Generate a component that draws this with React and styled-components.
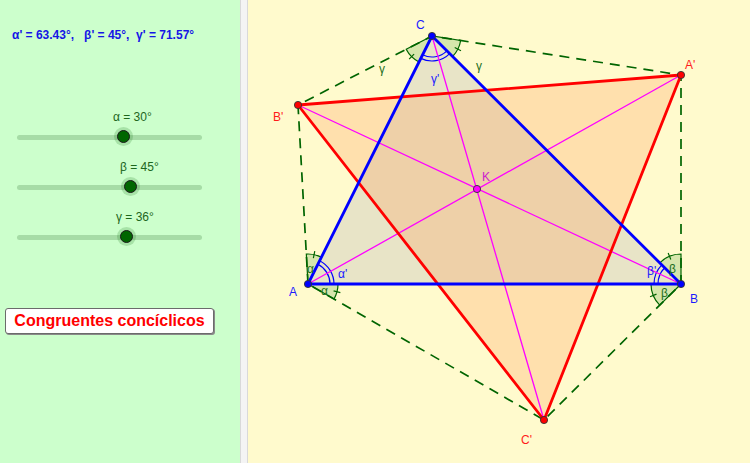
import React from 'react'
import styled, { createGlobalStyle } from 'styled-components'

const GlobalStyle = createGlobalStyle`
html, body {
  margin: 0;
  padding: 0;
  overflow: hidden;
}
body {
  font-family: "Liberation Sans", Arial, sans-serif;
}
`

const Page = styled.div`
display: flex;
width: 750px;
height: 463px;
`

const LeftPanel = styled.div`
width: 240px;
flex-shrink: 0;
background-color: #ccffcc;
display: flex;
flex-direction: column;
padding-top: 28px;
box-sizing: border-box;
`

const InfoLine = styled.div`
padding-left: 12px;
font-size: 12px;
line-height: 14px;
font-weight: bold;
color: #1515e6;
white-space: pre;
`

const SliderList = styled.div`
display: flex;
flex-direction: column;
gap: 10px;
margin-top: 68px;
`

const SliderBox = styled.div`
display: flex;
flex-direction: column;
padding-left: 17px;
`

const SliderLabel = styled.div`
font-size: 12px;
line-height: 14px;
color: #1d661d;
white-space: nowrap;
`

const TrackRow = styled.div`
height: 26px;
display: flex;
align-items: center;
`

const Track = styled.div`
position: relative;
width: 185px;
height: 5px;
border-radius: 3px;
background-color: #a6dca6;
`

const Thumb = styled.div`
position: absolute;
top: 50%;
width: 11px;
height: 11px;
margin: -7px 0 0 -7px;
border-radius: 50%;
background-color: #006600;
border: 1.5px solid #1a1a1a;
box-shadow: 0 0 0 3px rgba(0, 100, 0, 0.18);
`

const Button = styled.button`
align-self: flex-start;
margin: 58px 0 0 5px;
width: 209px;
height: 26px;
padding: 0;
background-color: #ffffff;
border: 1px solid #6b6b6b;
border-radius: 3px;
box-shadow: 1px 1px 0 #8a8a8a;
font-family: "Liberation Sans", Arial, sans-serif;
font-size: 16px;
font-weight: bold;
color: #ff0000;
cursor: pointer;
`

const Divider = styled.div`
width: 6px;
flex-shrink: 0;
background-color: #f4f4f4;
border-left: 1px solid #d9d9d9;
border-right: 1px solid #d9d9d9;
`

const Canvas = styled.div`
flex: 1;
background-color: #fffacd;
overflow: hidden;
svg {
  display: block;
}
`

const sliders = [
  { label: 'α = 30°', pos: 107, labelPad: 96 },
  { label: 'β = 45°', pos: 114, labelPad: 103 },
  { label: 'γ = 36°', pos: 110, labelPad: 99 },
]

const P = {
  A: [308, 284],
  B: [681, 284],
  C: [432, 36],
  A1: [681, 75],
  B1: [298, 105],
  C1: [544, 420],
  K: [477, 189],
}

const pt = (c, r, deg) => {
  const t = (deg * Math.PI) / 180
  return [c[0] + r * Math.cos(t), c[1] - r * Math.sin(t)]
}

const sectorPath = (c, r, a1, a2) => {
  const p1 = pt(c, r, a1)
  const p2 = pt(c, r, a2)
  return `M${c[0]} ${c[1]} L${p1[0]} ${p1[1]} A${r} ${r} 0 0 0 ${p2[0]} ${p2[1]} Z`
}

const arcPath = (c, r, a1, a2) => {
  const p1 = pt(c, r, a1)
  const p2 = pt(c, r, a2)
  return `M${p1[0]} ${p1[1]} A${r} ${r} 0 0 0 ${p2[0]} ${p2[1]}`
}

const Sector = ({ c, r, a1, a2 }) => {
  const mid = (a1 + a2) / 2
  const t1 = pt(c, r - 3.5, mid)
  const t2 = pt(c, r + 3.5, mid)
  return (
    <g>
      <path d={sectorPath(c, r, a1, a2)} fill="rgba(0,128,0,0.16)" stroke="#006400" strokeWidth="1.2" />
      <line x1={t1[0]} y1={t1[1]} x2={t2[0]} y2={t2[1]} stroke="#006400" strokeWidth="1.2" />
    </g>
  )
}

const DoubleArc = ({ c, a1, a2, r1, r2 }) => (
  <g fill="none" stroke="#0000ff" strokeWidth="1.2">
    <path d={arcPath(c, r1, a1, a2)} />
    <path d={arcPath(c, r2, a1, a2)} />
  </g>
)

const Dot = ({ p, color }) => (
  <circle cx={p[0]} cy={p[1]} r="3.6" fill={color} stroke="#333" strokeWidth="0.9" />
)

const poly = (list) => list.map((p) => p.join(',')).join(' ')

const Figure = () => {
  const { A, B, C, A1, B1, C1, K } = P
  return (
    <svg width="502" height="463" viewBox="248 0 502 463" fontFamily="Liberation Sans, Arial, sans-serif" fontSize="12">
      <polygon points={poly([A, B, C])} fill="rgba(120,120,170,0.17)" />
      <polygon points={poly([A1, B1, C1])} fill="rgba(255,150,80,0.26)" />

      <polygon
        points={poly([A, B1, C, A1, B, C1])}
        fill="none"
        stroke="#006400"
        strokeWidth="1.7"
        strokeDasharray="10 7"
      />

      <Sector c={C} r={29} a1={-152.8} a2={-116.57} />
      <Sector c={C} r={29} a1={-44.9} a2={-8.9} />
      <Sector c={A} r={30} a1={63.43} a2={93.2} />
      <Sector c={A} r={30} a1={-30} a2={0} />
      <Sector c={B} r={30} a1={90} a2={135.1} />
      <Sector c={B} r={30} a1={180} a2={224.8} />

      <DoubleArc c={C} a1={-116.57} a2={-44.9} r1={21} r2={25} />
      <DoubleArc c={A} a1={0} a2={63.43} r1={22} r2={26} />
      <DoubleArc c={B} a1={135.1} a2={180} r1={23} r2={27} />

      <g stroke="#ff00ff" strokeWidth="1.3">
        <line x1={A[0]} y1={A[1]} x2={A1[0]} y2={A1[1]} />
        <line x1={B[0]} y1={B[1]} x2={B1[0]} y2={B1[1]} />
        <line x1={C[0]} y1={C[1]} x2={C1[0]} y2={C1[1]} />
      </g>

      <polygon points={poly([A1, B1, C1])} fill="none" stroke="#ff0000" strokeWidth="2.8" strokeLinejoin="round" />
      <polygon points={poly([A, B, C])} fill="none" stroke="#0000ff" strokeWidth="2.8" strokeLinejoin="round" />

      <Dot p={A} color="#0000ff" />
      <Dot p={B} color="#0000ff" />
      <Dot p={C} color="#0000ff" />
      <Dot p={A1} color="#ff0000" />
      <Dot p={B1} color="#ff0000" />
      <Dot p={C1} color="#ff0000" />
      <Dot p={K} color="#ff00ff" />

      <g fill="#1a1aff">
        <text x="416" y="29">C</text>
        <text x="289" y="296">A</text>
        <text x="690" y="303">B</text>
      </g>
      <g fill="#ff1a1a">
        <text x="685" y="69">A'</text>
        <text x="273" y="121">B'</text>
        <text x="521" y="444">C'</text>
      </g>
      <text x="482" y="181" fill="#cc22cc">K</text>

      <g fill="#1d6e1d">
        <text x="379" y="73">γ</text>
        <text x="476" y="70">γ</text>
        <text x="307" y="273">α</text>
        <text x="321" y="295">α</text>
        <text x="669" y="273">β</text>
        <text x="661" y="297">β</text>
      </g>
      <g fill="#1a1aff">
        <text x="431" y="83">γ'</text>
        <text x="338" y="278">α'</text>
        <text x="647" y="275">β'</text>
      </g>
    </svg>
  )
}

const App = () => {
  return (
    <>
      <GlobalStyle />
      <Page>
        <LeftPanel>
          <InfoLine>{"α' = 63.43°,   β' = 45°,  γ' = 71.57°"}</InfoLine>
          <SliderList>
            {sliders.map((s, i) => (
              <SliderBox key={i}>
                <SliderLabel style={{ paddingLeft: s.labelPad }}>{s.label}</SliderLabel>
                <TrackRow>
                  <Track>
                    <Thumb style={{ left: s.pos }} />
                  </Track>
                </TrackRow>
              </SliderBox>
            ))}
          </SliderList>
          <Button>Congruentes concíclicos</Button>
        </LeftPanel>
        <Divider />
        <Canvas>
          <Figure />
        </Canvas>
      </Page>
    </>
  )
}

export default App
